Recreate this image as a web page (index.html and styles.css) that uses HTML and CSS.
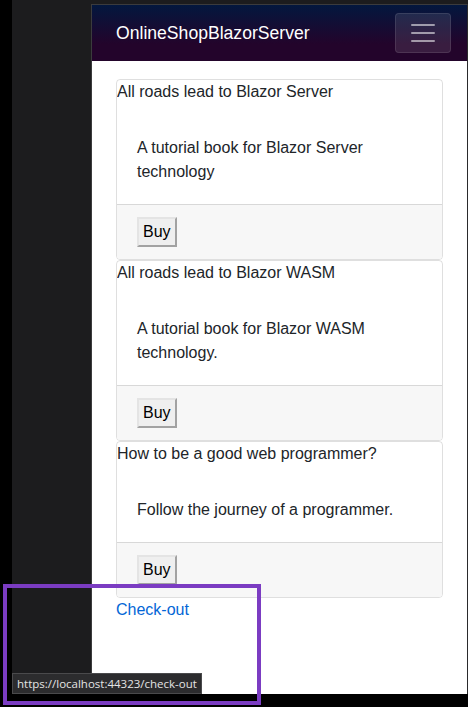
FILE: index.html
```html
<!DOCTYPE html>
<html lang="en">
<head>
<meta charset="utf-8">
<title>OnlineShopBlazorServer</title>
<link rel="stylesheet" href="styles.css">
</head>
<body>
<div class="screen">
  <div class="edge"></div>
  <div class="devtools">
    <div class="viewport">
      <header class="top-row">
        <a class="brand" href="#">OnlineShopBlazorServer</a>
        <button class="toggler" type="button" aria-label="Navigation menu">
          <svg class="toggler-icon" viewBox="0 0 30 30" width="30" height="30">
            <path d="M4 7h22M4 15h22M4 23h22" stroke="rgba(255,255,255,0.55)" stroke-width="2" stroke-linecap="round" fill="none"/>
          </svg>
        </button>
      </header>
      <main class="content">
        <div class="card">
          <div class="card-title">All roads lead to Blazor Server</div>
          <div class="card-body">A tutorial book for Blazor Server technology</div>
          <div class="card-footer"><button class="buy" type="button">Buy</button></div>
        </div>
        <div class="card">
          <div class="card-title">All roads lead to Blazor WASM</div>
          <div class="card-body">A tutorial book for Blazor WASM technology.</div>
          <div class="card-footer"><button class="buy" type="button">Buy</button></div>
        </div>
        <div class="card">
          <div class="card-title">How to be a good web programmer?</div>
          <div class="card-body">Follow the journey of a programmer.</div>
          <div class="card-footer"><button class="buy" type="button">Buy</button></div>
        </div>
        <a class="checkout" href="#">Check-out</a>
      </main>
    </div>
  </div>
</div>
<div class="status-tip">https://localhost:44323/check-out</div>
<div class="highlight"></div>
</body>
</html>
```
FILE: styles.css
```css
html, body {
  margin: 0;
  padding: 0;
}
body {
  width: 468px;
  height: 707px;
  background: #000;
  position: relative;
  overflow: hidden;
  font-family: "Liberation Sans", Arial, sans-serif;
}
.screen {
  display: flex;
  height: 694px;
}
.edge {
  width: 12px;
  background: #000;
}
.devtools {
  flex: 1;
  background: #1c1c1e;
  padding: 4px 0 0 79px;
  display: flex;
}
.viewport {
  width: 375px;
  border-top: 1px solid #3b3b3d;
  border-left: 1px solid #3b3b3d;
  border-right: 1px solid #2a2a2c;
  background: #fff;
  display: flex;
  flex-direction: column;
}
.top-row {
  height: 56px;
  box-sizing: border-box;
  display: flex;
  align-items: center;
  justify-content: space-between;
  padding: 0 16px 0 24px;
  background: linear-gradient(180deg, rgb(3, 23, 62) 0%, rgb(35, 4, 43) 70%);
}
.brand {
  color: #fff;
  font-size: 17.6px;
  text-decoration: none;
  line-height: 1.5;
}
.toggler {
  width: 56px;
  height: 40px;
  box-sizing: border-box;
  padding: 4px 12px;
  background: rgba(255, 255, 255, 0.1);
  border: 1px solid rgba(255, 255, 255, 0.1);
  border-radius: 4px;
  display: flex;
  align-items: center;
  justify-content: center;
}
.toggler-icon {
  display: block;
}
.content {
  padding: 18px 24px 0 24px;
  display: flex;
  flex-direction: column;
  font-size: 16px;
  line-height: 24px;
  color: #212529;
}
.card {
  border: 1px solid rgba(0, 0, 0, 0.125);
  border-radius: 4px;
  display: flex;
  flex-direction: column;
  overflow: hidden;
}
.card-title {
  line-height: 24px;
}
.card-body {
  padding: 32px 20px 20px 20px;
}
.card-footer {
  background: #f7f7f7;
  border-top: 1px solid rgba(0, 0, 0, 0.125);
  padding: 12px 20px;
  display: flex;
}
.buy {
  font-family: "Liberation Sans", Arial, sans-serif;
  font-size: 16px;
  line-height: 24px;
  color: #000;
  background: #efefef;
  border-style: solid;
  border-width: 2px;
  border-color: #e4e4e4 #a2a2a2 #a2a2a2 #e4e4e4;
  border-radius: 0;
  padding: 1px 4px;
  margin: 0;
  height: 30px;
  box-sizing: border-box;
}
.checkout {
  color: #0366d6;
  text-decoration: none;
  align-self: flex-start;
  line-height: 24px;
}
.status-tip {
  position: absolute;
  left: 12px;
  top: 673px;
  height: 21px;
  box-sizing: border-box;
  padding: 0 4px;
  background: #2c2c2e;
  border: 1px solid #4a4a4c;
  color: #e4e4e4;
  font-family: "Open Sans", "Liberation Sans", sans-serif;
  font-size: 11.5px;
  line-height: 19px;
  white-space: nowrap;
}
.highlight {
  position: absolute;
  left: 3px;
  top: 584px;
  width: 258px;
  height: 121px;
  box-sizing: border-box;
  border: 4px solid #7b3cc2;
}
```
